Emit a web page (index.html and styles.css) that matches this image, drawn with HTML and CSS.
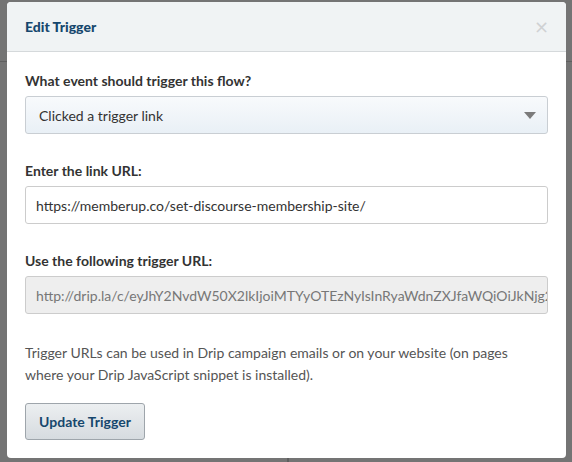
FILE: index.html
```html
<!DOCTYPE html>
<html>
<head>
<meta charset="utf-8">
<link rel="stylesheet" href="styles.css">
</head>
<body>
<div class="backdrop">
  <div class="bg-line-h"></div>
  <div class="bg-line-v"></div>
  <div class="modal">
    <div class="modal-header">
      <h2 class="modal-title">Edit Trigger</h2>
      <span class="close">&times;</span>
    </div>
    <div class="modal-body">
      <div class="field">
        <label class="label">What event should trigger this flow?</label>
        <div class="select">
          <span>Clicked a trigger link</span>
          <svg class="caret" width="12" height="7" viewBox="0 0 12 7"><path d="M0 0H12L6 7Z" fill="#7b7b7b"/></svg>
        </div>
      </div>
      <div class="field">
        <label class="label">Enter the link URL:</label>
        <div class="input">https://memberup.co/set-discourse-membership-site/</div>
      </div>
      <div class="field">
        <label class="label">Use the following trigger URL:</label>
        <div class="input readonly">http://drip.la/c/eyJhY2NvdW50X2lkIjoiMTYyOTEzNyIsInRyaWdnZXJfaWQiOiJkNjg2NzE4In0</div>
      </div>
      <p class="help">Trigger URLs can be used in Drip campaign emails or on your website (on pages where your Drip JavaScript snippet is installed).</p>
      <button class="btn">Update Trigger</button>
    </div>
  </div>
</div>
</body>
</html>
```
FILE: styles.css
```css
* { box-sizing: border-box; }
html, body { margin: 0; padding: 0; }
body {
  width: 572px;
  height: 462px;
  overflow: hidden;
  font-family: Lato, "Liberation Sans", Arial, sans-serif;
  background: #747474;
}
.backdrop {
  position: relative;
  width: 572px;
  height: 462px;
  padding: 2px 6px 0 7px;
}
.bg-line-h {
  position: absolute;
  left: 0; right: 0; top: 61px;
  height: 1px;
  background: #5f5f5f;
}
.bg-line-v {
  position: absolute;
  left: 287px; top: 440px;
  width: 2px; height: 22px;
  background: #5f5f5f;
}
.modal {
  position: relative;
  width: 559px;
  height: 456px;
  background: #fff;
  border-radius: 4px;
  overflow: hidden;
}
.modal-header {
  height: 50px;
  background: #f0f3f4;
  border-bottom: 1px solid #d5d9db;
  display: flex;
  align-items: center;
  justify-content: space-between;
  padding: 0 17px 0 18px;
}
.modal-title {
  margin: 0;
  font-size: 14px;
  font-weight: 900;
  color: #16476d;
}
.close {
  font-size: 18px;
  color: #cfd1d3;
  font-family: "DejaVu Sans", sans-serif;
  line-height: 1;
}
.modal-body {
  padding: 20px 18px 0 18px;
}
.field { margin-bottom: 28px; }
.label {
  display: block;
  font-size: 14px;
  font-weight: 700;
  color: #333;
  margin-bottom: 6px;
  line-height: 18px;
}
.select {
  height: 38px;
  border: 1px solid #c9ced3;
  border-radius: 3px;
  background: linear-gradient(#f8fafc, #e9f0f6);
  display: flex;
  align-items: center;
  justify-content: space-between;
  padding: 0 11px 0 13px;
  font-size: 14px;
  color: #333;
}
.caret { display: block; }
.input {
  height: 38px;
  border: 1px solid #ccc;
  border-radius: 3px;
  background: #fff;
  display: flex;
  align-items: center;
  padding: 0 10px;
  font-size: 14px;
  color: #333;
  white-space: nowrap;
  overflow: hidden;
}
.input.readonly {
  background: #eeeeee;
  color: #777;
}
.help {
  margin: 26px 0 0 0;
  font-size: 14px;
  line-height: 22px;
  color: #555;
}
.btn {
  margin-top: 17px;
  width: 120px;
  height: 37px;
  border: 1px solid #9ea5ab;
  border-radius: 3px;
  background: linear-gradient(#eceff1, #d6dbdf);
  font-family: inherit;
  font-size: 14px;
  font-weight: 700;
  color: #16476d;
  padding: 0;
}
```
